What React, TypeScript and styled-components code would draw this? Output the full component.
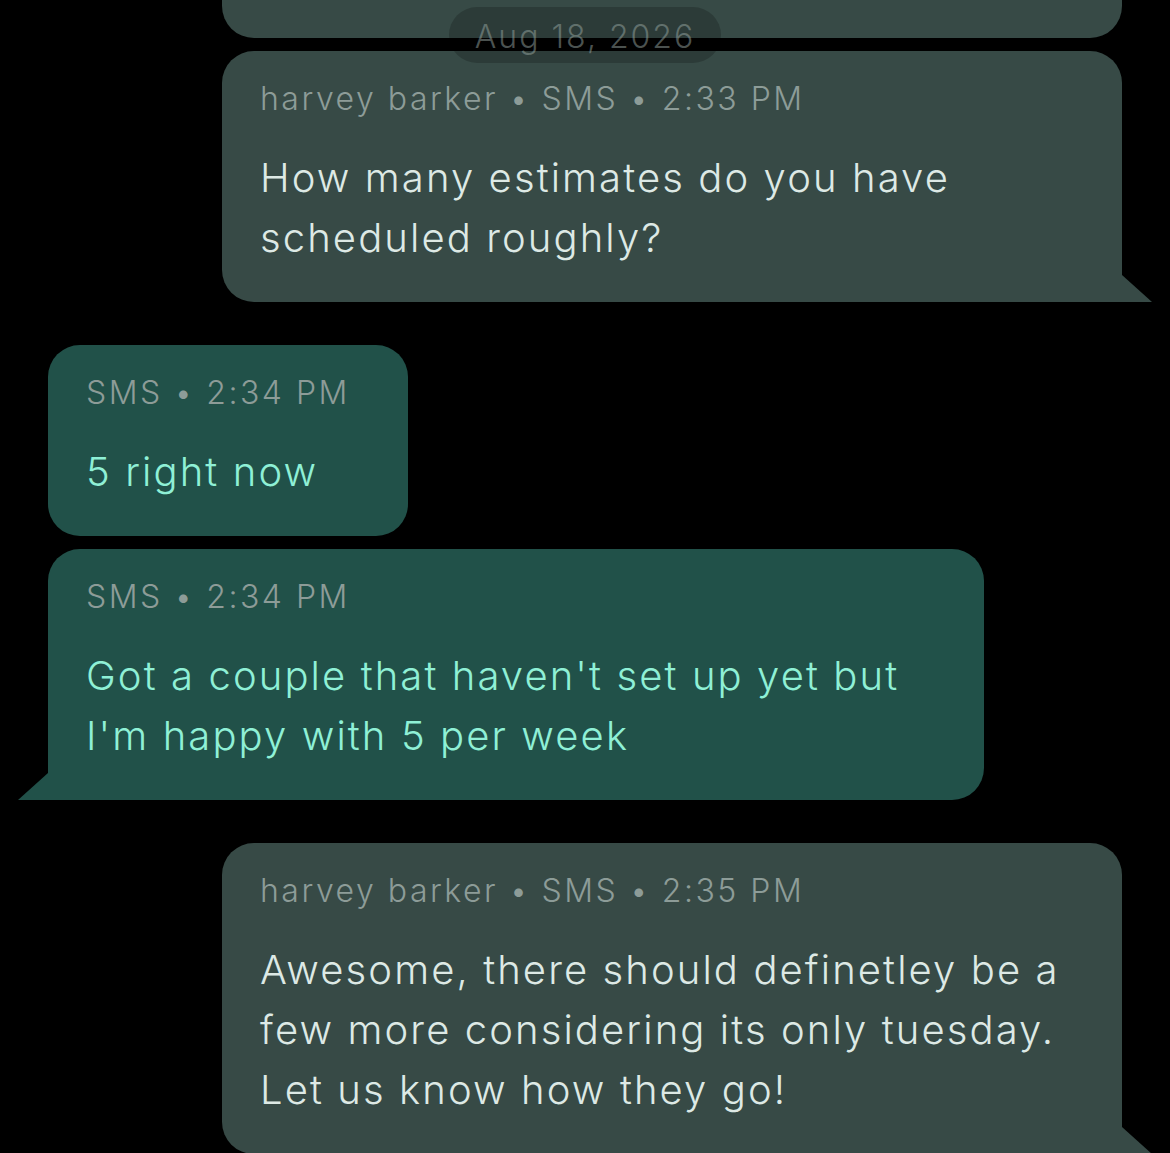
import styled, { createGlobalStyle } from 'styled-components';

const GlobalStyle = createGlobalStyle`
    html, body {
        margin: 0;
        padding: 0;
        background: #000;
    }
    body {
        font-family: Inter, "Noto Sans", sans-serif;
        -webkit-font-smoothing: antialiased;
    }
`;

const Thread = styled.div`
    position: relative;
    width: 1170px;
    height: 1153px;
    overflow: hidden;
    background: #000;
    display: flex;
    flex-direction: column;
    padding: 0 48px;
    box-sizing: border-box;
`;

const Row = styled.div<{ $mine?: boolean; $gap: number }>`
    display: flex;
    justify-content: ${p => (p.$mine ? 'flex-end' : 'flex-start')};
    margin-top: ${p => p.$gap}px;
`;

const Bubble = styled.div<{ $mine?: boolean; $tail?: boolean }>`
    position: relative;
    box-sizing: border-box;
    background: ${p => (p.$mine ? '#374a46' : '#215149')};
    border-radius: 32px;
    padding: ${p => (p.$mine ? '25px 40px 34px 38px' : '25px 58px 34px 38px')};
    ${p => (p.$mine ? 'width: 900px;' : 'max-width: 936px;')}
    ${p => p.$tail && p.$mine && 'border-bottom-right-radius: 0;'}
    ${p => p.$tail && !p.$mine && 'border-bottom-left-radius: 0;'}

    &::after {
        content: '';
        display: ${p => (p.$tail ? 'block' : 'none')};
        position: absolute;
        bottom: 0;
        width: 30px;
        height: 27px;
        background: inherit;
        ${p => (p.$mine
            ? 'left: 100%; clip-path: polygon(0 0, 100% 100%, 0 100%);'
            : 'right: 100%; clip-path: polygon(100% 0, 100% 100%, 0 100%);')}
    }
`;

const CutBubble = styled.div`
    width: 900px;
    height: 38px;
    background: #374a46;
    border-radius: 0 0 32px 32px;
`;

const Meta = styled.div`
    margin-top: 1px;
    font-size: 32px;
    font-weight: 300;
    line-height: 44px;
    color: #8d9c98;
    letter-spacing: 2.5px;
    white-space: nowrap;
`;

const Text = styled.div<{ $mine?: boolean }>`
    margin-top: 27px;
    font-size: 40px;
    font-weight: 300;
    line-height: 60px;
    letter-spacing: 2.1px;
    color: ${p => (p.$mine ? '#dde9e5' : '#8ff0d6')};
`;

const DatePill = styled.div`
    position: absolute;
    top: 7px;
    left: 449px;
    width: 272px;
    height: 56px;
    border-radius: 28px;
    background: rgba(0, 0, 0, 0.2);
    color: rgba(150, 165, 160, 0.5);
    font-size: 32px;
    font-weight: 300;
    line-height: 60px;
    text-align: center;
    letter-spacing: 2px;
`;

type Message = {
    mine?: boolean;
    meta: string;
    text: string;
    gap: number;
    tail?: boolean;
};

const messages: Message[] = [
    {
        mine: true,
        meta: 'harvey barker • SMS • 2:33 PM',
        text: 'How many estimates do you have scheduled roughly?',
        gap: 13,
        tail: true,
    },
    { meta: 'SMS • 2:34 PM', text: '5 right now', gap: 43 },
    {
        meta: 'SMS • 2:34 PM',
        text: "Got a couple that haven't set up yet but I'm happy with 5 per week",
        gap: 13,
        tail: true,
    },
    {
        mine: true,
        meta: 'harvey barker • SMS • 2:35 PM',
        text: 'Awesome, there should definetley be a few more considering its only tuesday. Let us know how they go!',
        gap: 43,
        tail: true,
    },
];

export default function App() {
    return (
        <>
            <GlobalStyle />
            <Thread>
                <Row $mine $gap={0}>
                    <CutBubble />
                </Row>
                {messages.map((m, i) => (
                    <Row key={i} $mine={m.mine} $gap={m.gap}>
                        <Bubble $mine={m.mine} $tail={m.tail}>
                            <Meta>{m.meta}</Meta>
                            <Text $mine={m.mine}>{m.text}</Text>
                        </Bubble>
                    </Row>
                ))}
                <DatePill>Aug 18, 2026</DatePill>
            </Thread>
        </>
    );
}
